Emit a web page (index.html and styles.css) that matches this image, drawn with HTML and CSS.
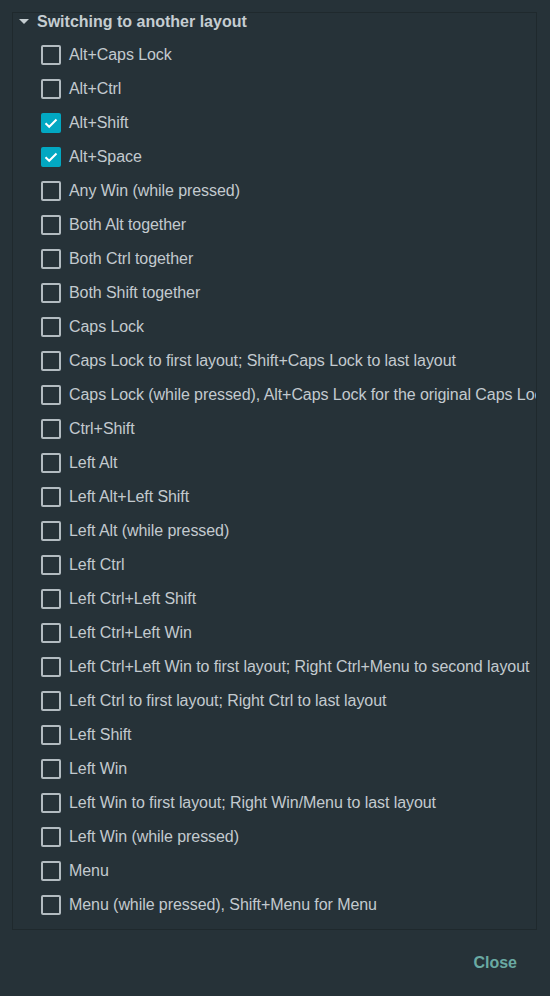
FILE: index.html
```html
<!DOCTYPE html>
<html>
<head>
<meta charset="utf-8">
<link rel="stylesheet" href="styles.css">
</head>
<body>
<div class="panel">
  <div class="header">
    <svg class="arrow" width="10" height="6" viewBox="0 0 10 6"><path d="M0 0 L10 0 L5 5 Z" fill="#c5cdd1"/></svg>
    <span>Switching to another layout</span>
  </div>
  <div class="list">
    <label class="row"><span class="box"></span><span class="txt">Alt+Caps Lock</span></label>
    <label class="row"><span class="box"></span><span class="txt">Alt+Ctrl</span></label>
    <label class="row"><span class="box on"><svg width="16" height="16" viewBox="0 0 16 16"><path d="M2.5 8.2 L6.2 11.8 L13.5 4.5" fill="none" stroke="#fff" stroke-width="2"/></svg></span><span class="txt">Alt+Shift</span></label>
    <label class="row"><span class="box on"><svg width="16" height="16" viewBox="0 0 16 16"><path d="M2.5 8.2 L6.2 11.8 L13.5 4.5" fill="none" stroke="#fff" stroke-width="2"/></svg></span><span class="txt">Alt+Space</span></label>
    <label class="row"><span class="box"></span><span class="txt">Any Win (while pressed)</span></label>
    <label class="row"><span class="box"></span><span class="txt">Both Alt together</span></label>
    <label class="row"><span class="box"></span><span class="txt">Both Ctrl together</span></label>
    <label class="row"><span class="box"></span><span class="txt">Both Shift together</span></label>
    <label class="row"><span class="box"></span><span class="txt">Caps Lock</span></label>
    <label class="row"><span class="box"></span><span class="txt">Caps Lock to first layout; Shift+Caps Lock to last layout</span></label>
    <label class="row"><span class="box"></span><span class="txt">Caps Lock (while pressed), Alt+Caps Lock for the original Caps Lock action</span></label>
    <label class="row"><span class="box"></span><span class="txt">Ctrl+Shift</span></label>
    <label class="row"><span class="box"></span><span class="txt">Left Alt</span></label>
    <label class="row"><span class="box"></span><span class="txt">Left Alt+Left Shift</span></label>
    <label class="row"><span class="box"></span><span class="txt">Left Alt (while pressed)</span></label>
    <label class="row"><span class="box"></span><span class="txt">Left Ctrl</span></label>
    <label class="row"><span class="box"></span><span class="txt">Left Ctrl+Left Shift</span></label>
    <label class="row"><span class="box"></span><span class="txt">Left Ctrl+Left Win</span></label>
    <label class="row"><span class="box"></span><span class="txt">Left Ctrl+Left Win to first layout; Right Ctrl+Menu to second layout</span></label>
    <label class="row"><span class="box"></span><span class="txt">Left Ctrl to first layout; Right Ctrl to last layout</span></label>
    <label class="row"><span class="box"></span><span class="txt">Left Shift</span></label>
    <label class="row"><span class="box"></span><span class="txt">Left Win</span></label>
    <label class="row"><span class="box"></span><span class="txt">Left Win to first layout; Right Win/Menu to last layout</span></label>
    <label class="row"><span class="box"></span><span class="txt">Left Win (while pressed)</span></label>
    <label class="row"><span class="box"></span><span class="txt">Menu</span></label>
    <label class="row"><span class="box"></span><span class="txt">Menu (while pressed), Shift+Menu for Menu</span></label>
  </div>
</div>
<div class="footer">
  <button class="close">Close</button>
</div>
</body>
</html>
```
FILE: styles.css
```css
html, body {
  margin: 0;
  padding: 0;
  background: #263238;
  font-family: "Liberation Sans", Arial, sans-serif;
  color: #c3cacf;
}
body {
  padding: 12px 13px 0 12px;
  width: 550px;
  box-sizing: border-box;
  height: 996px;
  overflow: hidden;
}
.panel {
  border: 1px solid #1f292d;
  overflow: hidden;
  padding-bottom: 7px;
}
.header {
  display: flex;
  align-items: center;
  height: 17px;
  padding-bottom: 8px;
  font-weight: bold;
  font-size: 16px;
  color: #c5cdd1;
  white-space: nowrap;
}
.arrow {
  margin-left: 6px;
  margin-right: 8px;
  margin-top: 0px;
}
.list {
  display: flex;
  flex-direction: column;
}
.row {
  display: flex;
  align-items: center;
  height: 34px;
  padding-left: 28px;
  white-space: nowrap;
  font-size: 16px;
  letter-spacing: -0.07px;
}
.box {
  flex: none;
  width: 20px;
  height: 20px;
  box-sizing: border-box;
  border: 2px solid #b3bcc1;
  border-radius: 2px;
  margin-right: 8px;
  display: flex;
  align-items: center;
  justify-content: center;
}
.box.on {
  background: #02a8c2;
  border-color: #02a8c2;
}
.footer {
  display: flex;
  justify-content: flex-end;
  padding-top: 20px;
}
.close {
  background: none;
  border: none;
  font-family: "Liberation Sans", Arial, sans-serif;
  font-weight: bold;
  font-size: 16px;
  color: #6aaaa3;
  padding: 4px 20px 4px 8px;
  margin-right: 0;
}
```
